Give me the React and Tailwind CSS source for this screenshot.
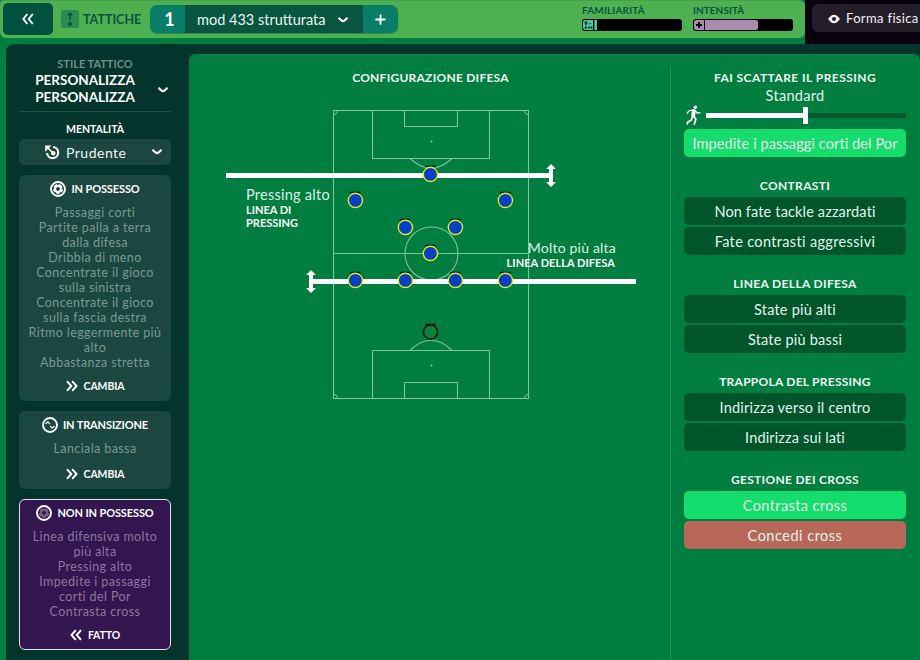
import { Plus } from "lucide-react";

const instructionGroups = [
    { title: "CONTRASTI", track: "tracking-[0.35px]", items: [
        { label: "Non fate tackle azzardati", track: "tracking-[0.15px]" },
        { label: "Fate contrasti aggressivi", track: "tracking-[0.35px]" },
    ] },
    { title: "LINEA DELLA DIFESA", track: "tracking-[0.35px]", items: [
        { label: "State più alti", track: "tracking-[0.2px]" },
        { label: "State più bassi", track: "tracking-[0.2px]" },
    ] },
    { title: "TRAPPOLA DEL PRESSING", track: "tracking-[0.25px]", items: [
        { label: "Indirizza verso il centro", track: "tracking-[0.2px]" },
        { label: "Indirizza sui lati", track: "tracking-[0.15px]" },
    ] },
    { title: "GESTIONE DEI CROSS", track: "tracking-[0.3px]", items: [
        { label: "Contrasta cross", track: "tracking-[0.4px]", color: "bg-[#14dd6b]" },
        { label: "Concedi cross", track: "tracking-[0.5px]", color: "bg-[#b86858]" },
    ] },
];

const players = [
    [430, 174], [355, 200], [505, 200], [405, 227], [455, 227],
    [430, 253], [355, 280], [405, 280], [455, 280], [505, 280],
];

function Chevron({ className }) {
    return (
        <svg className={className} width="12" height="8" viewBox="0 0 12 8" fill="none" stroke="#fff" strokeWidth="2">
            <path d="M1.5 1.8 Q4.5 5 6 5.2 Q7.5 5 10.5 1.8" />
        </svg>
    );
}

function DoubleChevron({ left }) {
    return (
        <svg className={left ? "rotate-180" : ""} width="12" height="12" viewBox="0 0 12 12" fill="none" stroke="#fff" strokeWidth="2">
            <path d="M1 1.2 L5.3 6 L1 10.8 M6.2 1.2 L10.5 6 L6.2 10.8" />
        </svg>
    );
}

function PhaseIcon({ type }) {
    return (
        <svg width="16" height="16" viewBox="0 0 16 16" fill="none">
            <circle cx="8" cy="8" r="7" stroke="#fff" strokeWidth="1.9" />
            {type === "transition" ? (
                <path d="M3.6 7 L5.8 4.8 L8 7 M8 9 L10.2 11.2 L12.4 9" stroke="#fff" strokeWidth="1.2" />
            ) : (
                <g fill={type === "ball" ? "#fff" : "#76608a"}>
                    <circle cx="8" cy="8" r="5" />
                    <g fill={type === "ball" ? "#1d453f" : "#36154f"}>
                        <path d="M8 5.8 L10.1 7.3 L9.3 9.8 H6.7 L5.9 7.3 Z" />
                        <path d="M6.2 2.6 H9.8 L8 4.2 Z M12.4 5.2 L13.4 8.8 L11.5 7.3 Z M3.6 5.2 L2.6 8.8 L4.5 7.3 Z M4 11.9 L5.7 10.8 L6.5 13.2 Z M12 11.9 L10.3 10.8 L9.5 13.2 Z" />
                    </g>
                </g>
            )}
        </svg>
    );
}

function PhaseCard({ type, title, lines, action, height, active }) {
    return (
        <div className={`${height} flex flex-col items-center rounded-[6px] ${active ? "bg-[#33154f] outline outline-1 -outline-offset-1 outline-[#e8e0ee]" : "bg-[#1c4740]"}`}>
            <div className="mt-[5px] flex h-[18px] items-center gap-[5px] text-[11px] font-bold tracking-[-0.12px] whitespace-nowrap text-white">
                <PhaseIcon type={type} />
                <span className="pt-px">{title}</span>
            </div>
            <div className={`mt-[7px] text-center text-[12.5px] leading-[15px] tracking-[0.4px] whitespace-nowrap ${active ? "text-[#8c779d]" : "text-[#789a90]"}`}>
                {lines.map((line, i) => <p key={i}>{line}</p>)}
            </div>
            <div className="mt-auto mb-[7px] flex h-4 items-center gap-[6px] text-[10.5px] font-bold tracking-[-0.1px] text-white">
                <DoubleChevron left={active} />
                <span className="pt-px">{action}</span>
            </div>
        </div>
    );
}

function Header() {
    return (
        <header className="flex h-11 bg-[#09020f]">
            <div className="h-11 w-[805px] shrink-0 bg-[#007e3f]">
                <div className="flex h-[38px] rounded-br-[6px] rounded-bl-[6px] rounded-tr-[6px] rounded-tl-[4px] border-t border-[#45a24b] bg-[#4eb151]">
                    <div className="mt-[2px] ml-[3px] flex h-8 w-[50px] items-center justify-center rounded-[5px] bg-[#02513f]">
                        <svg width="12" height="12" viewBox="0 0 12 12" fill="none" stroke="#fff" strokeWidth="1.9">
                            <path d="M5.4 1 L1.3 6 L5.4 11 M10.8 1 L6.7 6 L10.8 11" />
                        </svg>
                    </div>
                    <svg className="mt-[9px] ml-2" width="18" height="18" viewBox="0 0 18 18">
                        <rect width="18" height="18" rx="2" fill="#2d8a51" />
                        <path d="M8.2 10 V5.5 H6 L9 2 L12 5.5 H9.8 V10 Z" fill="#075340" />
                        <circle cx="9" cy="14" r="2" fill="#075340" />
                    </svg>
                    <span className="mt-[9px] ml-1 w-[67px] text-[12.5px] leading-[20px] font-bold text-[#075340]">TATTICHE</span>
                    <div className="mt-1 flex h-7 overflow-hidden rounded-[7px] shadow-[0_1px_1px_rgba(0,70,40,0.35)]">
                        <div className="flex w-[35px] items-center justify-center bg-[#087d68] pl-1 text-[18px] font-bold text-white">1</div>
                        <div className="flex w-[178px] items-center bg-[#085640] pt-px pl-[12px] text-[14.5px] text-[#eaf5ef]">
                            <span className="w-[130px] whitespace-nowrap">mod 433 strutturata</span>
                            <Chevron className="ml-[10px]" />
                        </div>
                        <div className="flex w-[35px] items-center justify-center bg-[#087d68]">
                            <Plus size={15} strokeWidth={3} color="#fff" />
                        </div>
                    </div>
                    <div className="ml-[184px] w-[100px]">
                        <p className="mt-[3px] text-[10px] leading-[13px] font-bold tracking-[0.15px] whitespace-nowrap text-[#075340]">FAMILIARITÀ</p>
                        <div className="mt-[2px] flex h-3 rounded-[3px] bg-black p-px">
                            <svg width="14" height="10" viewBox="0 0 14 10">
                                <path d="M2 0H10V10H2A2 2 0 0 1 0 8V2A2 2 0 0 1 2 0ZM11.3 0H14V10H11.3Z" fill="#47c9a0" />
                                <path d="M1 3.2 L3 1 L5 3.2 H3.7 V5 H2.3 V3.2ZM1.8 6.6h2v2h-2zM5 6.6h1.6v2H5zM7.6 6.6h1.6v2H7.6zM6.6 3h1.2v1.2H6.6z" fill="#041c16" />
                            </svg>
                        </div>
                    </div>
                    <div className="ml-[11px] w-[100px]">
                        <p className="mt-[3px] text-[10px] leading-[13px] font-bold tracking-[0.05px] whitespace-nowrap text-[#075340]">INTENSITÀ</p>
                        <div className="mt-[2px] flex h-3 rounded-[3px] bg-black p-px">
                            <svg width="64" height="10" viewBox="0 0 64 10">
                                <rect width="64" height="10" rx="2.5" fill="#ac8bb1" />
                                <path d="M4 2h2v2h2v2H6v2H4V6H2V4h2zM10 0h1v10h-1z" fill="#000" />
                            </svg>
                        </div>
                    </div>
                </div>
            </div>
            <div className="mt-1 ml-[7px] flex h-7 w-[120px] shrink-0 items-center gap-[6px] rounded-[6px] bg-[#241e28] pt-px pl-4 text-[13px] tracking-[0.35px] whitespace-nowrap text-[#f2eef3]">
                <svg width="12" height="10" viewBox="0 0 12 10">
                    <path d="M0 5 Q6 -3.5 12 5 Q6 13.5 0 5Z" fill="#f7f2f2" />
                    <circle cx="6" cy="5" r="2" fill="#241e28" />
                </svg>
                <span>Forma fisica</span>
            </div>
        </header>
    );
}

function Sidebar() {
    return (
        <aside className="flex w-[183px] shrink-0 flex-col pr-[18px] pl-[13px]">
            <div className="relative h-[68px] shrink-0 border-b border-[#22534a] pt-[12px] text-center">
                <p className="text-[11px] leading-4 font-bold text-[#6e8f86]">STILE TATTICO</p>
                <div className="mr-[20px] text-[13.5px] leading-[17px] font-bold text-white">
                    <p>PERSONALIZZA</p>
                    <p>PERSONALIZZA</p>
                </div>
                <Chevron className="absolute right-[2px] bottom-[17px]" />
            </div>
            <p className="mt-[9px] h-[15px] text-center text-[10.5px] leading-4 font-bold tracking-[-0.05px] text-white">MENTALITÀ</p>
            <div className="mt-[3px] flex h-[26px] shrink-0 items-center rounded-[6px] bg-[#1c4740] pl-[26px] text-[14px] text-[#eef5f2]">
                <svg width="15" height="15" viewBox="0 0 15 15" fill="none" stroke="#fffaf0" strokeWidth="2.2">
                    <path d="M8 2 A5.6 5.6 0 1 1 2 8" />
                    <path d="M8.5 8.5 L3 3" strokeWidth="1.7" />
                    <circle cx="8.3" cy="8.3" r="2.2" fill="#fffaf0" stroke="none" />
                    <path d="M.2 .5 H6.5 L.2 6.8 Z" fill="#fffaf0" stroke="none" />
                </svg>
                <span className="ml-[6px] w-[61px] tracking-[0.5px]">Prudente</span>
                <Chevron className="ml-6" />
            </div>
            <div className="mt-[10px] flex flex-col gap-[10px]">
                <PhaseCard
                    type="ball"
                    title="IN POSSESSO"
                    action="CAMBIA"
                    height="h-[226px]"
                    lines={["Passaggi corti", "Partite palla a terra", "dalla difesa", "Dribbla di meno", "Concentrate il gioco", "sulla sinistra", "Concentrate il gioco", "sulla fascia destra", "Ritmo leggermente più", "alto", "Abbastanza stretta"]}
                />
                <PhaseCard type="transition" title="IN TRANSIZIONE" action="CAMBIA" height="h-[78px]" lines={["Lanciala bassa"]} />
                <PhaseCard
                    type="ballOff"
                    title="NON IN POSSESSO"
                    action="FATTO"
                    height="h-[151px]"
                    active
                    lines={["Linea difensiva molto", "più alta", "Pressing alto", "Impedite i passaggi", "corti del Por", "Contrasta cross"]}
                />
            </div>
        </aside>
    );
}

function Pitch() {
    return (
        <div className="relative ml-[36px] h-[300px] w-[412px]">
            <svg width="412" height="300" viewBox="225 105 412 300" fill="none">
                <g stroke="#80c09f" strokeWidth="1.1">
                    <rect x="333.5" y="110.5" width="195" height="288" />
                    <path d="M333.5 253.5 H528.5" />
                    <circle cx="431.5" cy="253.5" r="26.5" />
                    <path d="M372.5 110.5 V158.5 H489.5 V110.5 M404.5 110.5 V126.5 H457.5 V110.5" />
                    <path d="M372.5 398.5 V350.5 H489.5 V398.5 M404.5 398.5 V382.5 H457.5 V398.5" />
                    <path d="M410 158.5 Q431 178 452 158.5 M410 350.5 Q431 330 452 350.5" />
                    <path d="M337.5 110.5 A4 4 0 0 1 333.5 114.5 M524.5 110.5 A4 4 0 0 0 528.5 114.5 M333.5 394.5 A4 4 0 0 1 337.5 398.5 M528.5 394.5 A4 4 0 0 0 524.5 398.5" />
                    <path d="M430.5 141.5 H432.5 M431.5 140.5 V142.5 M430.5 365.5 H432.5 M431.5 364.5 V366.5" />
                </g>
                <g fill="#fff">
                    <path d="M226 173 H549 V178 H226 Z M313 279 H636 V284 H313 Z" />
                    <path d="M551 164 L556 169 H553 V182 H556 L551 187 L546 182 H549 V169 H546 Z" />
                    <path d="M311 270 L316 275 H313 V288 H316 L311 293 L306 288 H309 V275 H306 Z" />
                </g>
                {players.map(([x, y]) => (
                    <g key={`${x}-${y}`}>
                        <path d={`M${x - 5} ${y - 7} L${x - 3.5} ${y - 7.6} H${x + 4} L${x + 5.5} ${y - 7}`} stroke="#04170c" strokeWidth="1.4" />
                        <circle cx={x + 0.4} cy={y + 0.4} r="7.1" fill="#0340c4" stroke="#e9e81c" strokeWidth="1.4" />
                    </g>
                ))}
                <path d="M425.5 325 V324.5 H435 V325" stroke="#04170c" strokeWidth="1.5" />
                <circle cx="430.5" cy="332" r="7.1" fill="#078238" stroke="#04170c" strokeWidth="1.6" />
            </svg>
            <div className="absolute top-[82px] left-[21px] text-white">
                <p className="text-[14.5px] leading-4 tracking-[0.25px] whitespace-nowrap text-[#dff1e7]">Pressing alto</p>
                <p className="text-[11px] leading-[13px] font-bold">LINEA DI<br />PRESSING</p>
            </div>
            <div className="absolute top-[135px] right-[21px] text-right whitespace-nowrap text-white">
                <p className="text-[14px] leading-4 tracking-[0.2px] text-[#dff1e7]">Molto più alta</p>
                <p className="pr-px text-[11px] leading-[14px] font-bold tracking-[0.05px]">LINEA DELLA DIFESA</p>
            </div>
        </div>
    );
}

function Instruction({ label, track, color = "bg-[#00552b]" }) {
    return (
        <div className={`flex h-7 items-center justify-center rounded-[5px] pt-px text-[14.5px] whitespace-nowrap text-[#e4f5eb] ${track} ${color}`}>
            {label}
        </div>
    );
}

function Instructions() {
    return (
        <section className="mt-3 w-[250px] shrink-0 border-l border-[#26905a] pr-[14px] pl-[13px]">
            <h2 className="pt-[3px] text-center text-[12px] leading-[17px] font-bold tracking-[0.45px] text-[#eefaf3]">FAI SCATTARE IL PRESSING</h2>
            <p className="mt-px text-center text-[14.5px] leading-[18px] tracking-[0.3px] text-[#e4f5eb]">Standard</p>
            <div className="flex h-[21px] items-center">
                <svg className="ml-[2px] shrink-0" width="15" height="21" viewBox="0 0 15 21" fill="none" stroke="#fff" strokeLinecap="round" strokeLinejoin="round">
                    <circle cx="9.3" cy="2.2" r="1.8" fill="#fff" stroke="none" />
                    <path d="M7.8 5.8 L7.2 10.5" strokeWidth="3.8" />
                    <path d="M6 5.2 L3 5.8 L1.2 8.2 M9.5 6 L11.2 8 L14 7.8" strokeWidth="1.3" />
                    <path d="M7.8 11 L9.8 14.3 L8.3 19.3 M6.5 11.5 L5.2 15.3 L1.5 17.3 L1.3 19" strokeWidth="1.8" />
                </svg>
                <div className="ml-[5px] h-[5px] w-[97px] bg-white" />
                <div className="h-[17px] w-[5px] bg-white" />
                <div className="h-[5px] grow bg-[#005c30]" />
            </div>
            <div className="mt-[3px]">
                <Instruction label="Impedite i passaggi corti del Por" track="tracking-[0.1px]" color="bg-[#14dd6b]" />
            </div>
            {instructionGroups.map((group) => (
                <div key={group.title}>
                    <h3 className={`pt-[21px] pb-[3px] text-center text-[12px] leading-4 font-bold text-[#eefaf3] ${group.track}`}>{group.title}</h3>
                    <div className="flex flex-col gap-[2px]">
                        {group.items.map((item) => <Instruction key={item.label} {...item} />)}
                    </div>
                </div>
            ))}
        </section>
    );
}

export default function App() {
    return (
        <div className="h-[660px] w-[920px] overflow-hidden bg-[#007e3f] font-['Lato',sans-serif]">
            <Header />
            <div className="ml-[6px] flex h-[616px] rounded-tl-[8px] bg-[#03352d]">
                <Sidebar />
                <main className="mt-[10px] flex grow rounded-tl-[6px] rounded-tr-[6px] bg-[#007e3f]">
                    <div className="w-[481px] shrink-0">
                        <h2 className="mt-[16px] mb-[19px] pl-[2px] text-center text-[12px] leading-4 font-bold tracking-[0.25px] text-[#eefaf3]">CONFIGURAZIONE DIFESA</h2>
                        <Pitch />
                    </div>
                    <Instructions />
                </main>
            </div>
        </div>
    );
}
